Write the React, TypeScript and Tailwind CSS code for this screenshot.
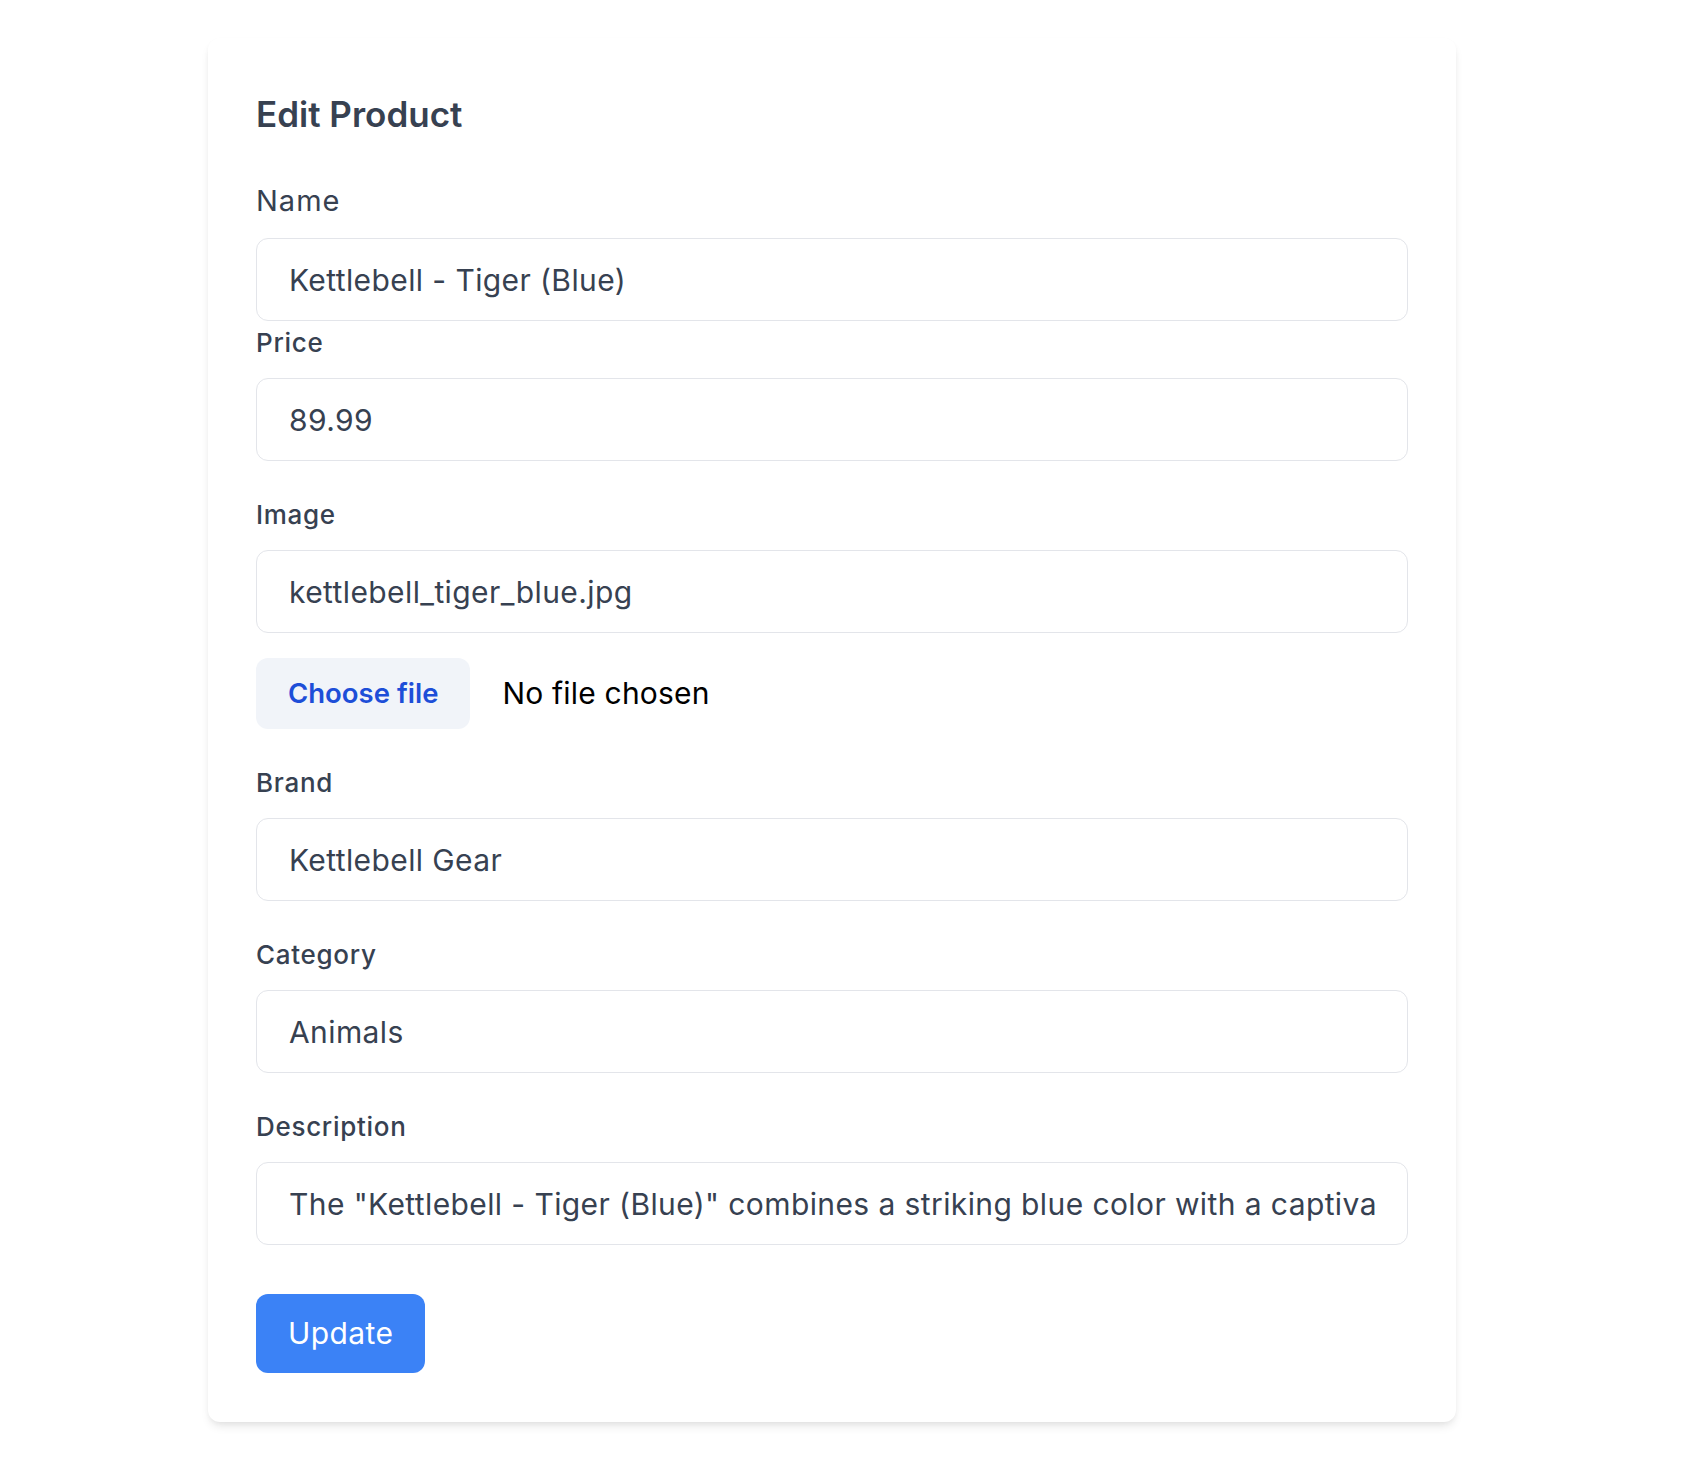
import React from 'react';

const fields = [
  { label: 'Brand', value: 'Kettlebell Gear' },
  { label: 'Category', value: 'Animals' },
  {
    label: 'Description',
    value:
      'The "Kettlebell - Tiger (Blue)" combines a striking blue color with a captivating tiger design, perfect for adding style to your workouts.',
  },
];

function TextInput({ value }: { value: string }) {
  return (
    <input
      readOnly
      value={value}
      className="block h-[83px] w-full rounded-[12px] border border-[#e3e5ea] bg-white px-[32px] text-[30px] tracking-[0.4px] text-[#374151] outline-none"
    />
  );
}

function Label({ children }: { children: React.ReactNode }) {
  return (
    <label className="mb-[17px] block text-[26px] font-medium leading-[36px] tracking-[0.7px] text-[#374151]">
      {children}
    </label>
  );
}

export default function App() {
  return (
    <div
      className="min-h-screen bg-white pl-[208px] pt-[38px]"
      style={{ fontFamily: 'Inter, "Noto Sans", sans-serif' }}
    >
      <div className="w-[1248px] rounded-[12px] bg-white px-[48px] pb-[49px] pt-[52px] shadow-[0_6px_10px_-2px_rgba(0,0,0,0.1),0_2px_6px_-2px_rgba(0,0,0,0.06)]">
        <h1 className="mb-[42px] text-[35px] font-semibold leading-[48px] text-[#374151]">
          Edit Product
        </h1>

        {/* Name */}
        <label className="mb-[16px] block text-[29px] leading-[42px] tracking-[1px] text-[#374151]">
          Name
        </label>
        <TextInput value="Kettlebell - Tiger (Blue)" />

        {/* Price */}
        <div className="mt-[4px] mb-[36px]">
          <Label>Price</Label>
          <TextInput value="89.99" />
        </div>

        {/* Image */}
        <div className="mb-[36px]">
          <Label>Image</Label>
          <TextInput value="kettlebell_tiger_blue.jpg" />
          <div className="mt-[25px] flex items-center">
            <span className="flex h-[71px] items-center rounded-[12px] bg-[#f1f4f9] px-[32px] text-[27.5px] font-semibold text-[#1d4ed8]">
              Choose file
            </span>
            <span className="ml-[32px] text-[30px] tracking-[0.2px] text-black">No file chosen</span>
          </div>
        </div>

        {fields.map((f) => (
          <div key={f.label} className="mb-[36px]">
            <Label>{f.label}</Label>
            <TextInput value={f.value} />
          </div>
        ))}

        <button className="mt-[49px] flex h-[79px] items-center rounded-[12px] bg-[#3b82f6] px-[32px] text-[30px] tracking-[0.4px] text-white">
          Update
        </button>
      </div>
    </div>
  );
}
